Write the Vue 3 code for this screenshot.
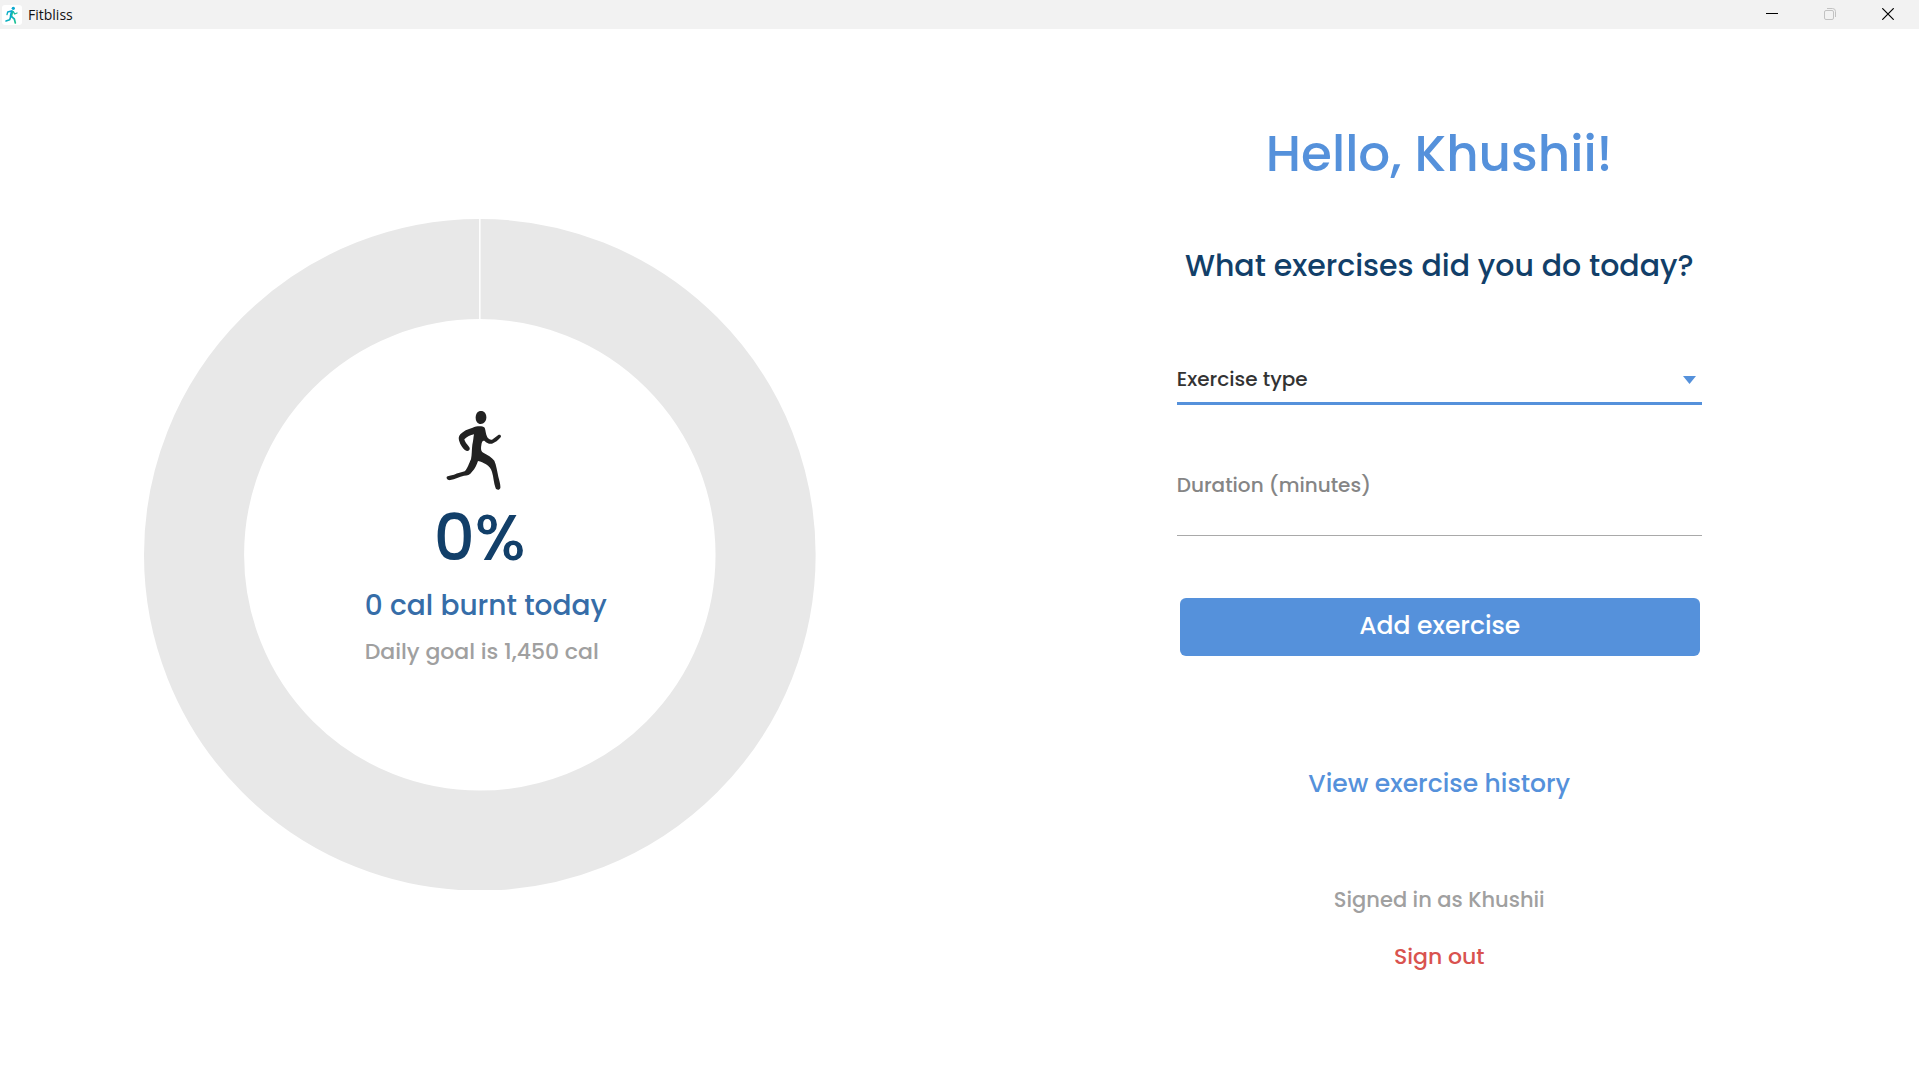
<script setup>
import { ref } from 'vue'

const userName = 'Khushii'
const caloriesBurnt = ref(0)
const dailyGoal = 1450
const exercise = ref('')
const duration = ref('')
const exercises = ['Running', 'Walking', 'Cycling', 'Swimming']
</script>

<template>
  <div class="window">
    <header class="titlebar">
      <svg class="app-icon" viewBox="0 0 60 60" aria-hidden="true">
        <defs>
          <linearGradient id="runner-tint" x1="0" y1="0" x2="1" y2="1">
            <stop offset="0" stop-color="#00a3dc" />
            <stop offset="1" stop-color="#1fc48f" />
          </linearGradient>
        </defs>
        <rect width="60" height="60" rx="9" fill="#fff" />
        <circle cx="34" cy="10" r="5" fill="#0ba9d0" />
        <g fill="none" stroke="url(#runner-tint)" stroke-linecap="round" stroke-linejoin="round">
          <path stroke-width="4" d="M28 18 L17 21 L15 29 M34 20 L38 27 L45 24" />
          <path stroke-width="8" d="M30 20 L27 33" />
          <path stroke-width="5" d="M26 35 L23 44 L12 48 M29 35 L37 42 L40 54" />
        </g>
      </svg>
      <span class="app-name">Fitbliss</span>
      <div class="controls">
        <button type="button" aria-label="Minimize">
          <svg viewBox="0 0 12 12"><path d="M0 5.5H12" stroke="#000" /></svg>
        </button>
        <button type="button" aria-label="Restore" disabled>
          <svg viewBox="0 0 12 12" fill="none" stroke="#c2c2c2">
            <rect x="0.5" y="2.5" width="9" height="9" rx="1.5" />
            <path d="M3 0.5H8.5Q11.5 0.5 11.5 3.5V9" />
          </svg>
        </button>
        <button type="button" aria-label="Close">
          <svg viewBox="0 0 12 12"><path d="M0.3 0.3L11.7 11.7M11.7 0.3L0.3 11.7" stroke="#000" stroke-width="1.2" /></svg>
        </button>
      </div>
    </header>

    <main class="content">
      <section class="progress">
        <div class="chart">
          <svg class="ring" viewBox="0 0 671 671" aria-hidden="true">
            <circle cx="335.5" cy="335.5" r="285.5" fill="none" stroke="#e8e8e8" stroke-width="100" />
            <path d="M335.5 0V101" stroke="#fff" stroke-width="1.5" />
          </svg>
          <div class="summary">
            <svg class="runner" viewBox="0 60 360 240" fill="#222" aria-hidden="true">
              <path d="M183 63C193 63 199 71 199 82C199 94 192 102 182 102C173 102 167 94 167 83C167 71 173 63 183 63Z" />
              <path d="M158 113C170 108 187 107 194 113C197 120 197 132 202 142C206 148 211 150 216 149L234 136C240 132 245 137 242 142C235 151 225 158 216 161C208 163 200 159 194 153C188 150 185 157 184 166C182 177 183 184 190 188C202 194 216 202 223 212C229 225 231 242 235 260C239 274 242 286 241 294C239 301 230 301 227 295C221 279 221 262 216 246C213 235 207 229 198 223C190 218 183 214 174 213C170 224 166 236 156 245C150 254 142 257 132 257C118 260 105 267 91 270C83 272 79 267 80 261C83 256 93 257 102 254C113 249 124 247 134 244C143 236 147 220 153 208C156 194 155 179 157 164C160 153 160 142 162 133C151 135 141 140 133 148C134 155 141 163 147 170C152 176 148 184 141 183C131 180 123 168 119 157C115 148 115 140 121 133C130 123 143 117 158 113Z" />
            </svg>
            <strong class="percent">0%</strong>
            <div class="figures">
              <p class="burnt">{{ caloriesBurnt }} cal burnt today</p>
              <p class="goal">Daily goal is {{ dailyGoal.toLocaleString('en-US') }} cal</p>
            </div>
          </div>
        </div>
      </section>

      <section class="entry">
        <h1>Hello, {{ userName }}!</h1>
        <h2>What exercises did you do today?</h2>
        <form @submit.prevent>
          <div class="picker">
            <select v-model="exercise" aria-label="Exercise type">
              <option value="">Exercise type</option>
              <option v-for="name in exercises" :key="name">{{ name }}</option>
            </select>
            <svg class="arrow" viewBox="0 0 13 8" aria-hidden="true"><path d="M0 0H13L6.500 8Z" fill="#5591db" /></svg>
          </div>
          <label for="duration">Duration (minutes)</label>
          <input id="duration" v-model="duration" type="text" inputmode="numeric" />
          <button class="add" type="submit">Add exercise</button>
        </form>
        <a class="history" href="#history">View exercise history</a>
        <p class="account">Signed in as {{ userName }}</p>
        <a class="sign-out" href="#sign-out">Sign out</a>
      </section>
    </main>
  </div>
</template>

<style>
body {
  margin: 0;
  background: #fff;
}
</style>

<style scoped>
.window {
  display: flex;
  flex-direction: column;
  min-height: 100vh;
  font-family: Poppins, Inter, sans-serif;
  font-weight: 500;
}
.window * {
  box-sizing: border-box;
}
.titlebar {
  display: flex;
  align-items: center;
  height: 29px;
  padding-left: 2px;
  background: #f2f2f2;
}
.app-icon {
  width: 20px;
  height: 20px;
}
.app-name {
  margin-left: 6px;
  font: 400 14px/20px "Segoe UI", "Open Sans", sans-serif;
  color: #111;
}
.controls {
  display: flex;
  margin: 0 2px 0 auto;
}
.controls button {
  display: grid;
  place-items: center;
  width: 58px;
  height: 29px;
  padding: 0 0 2px;
  border: 0;
  background: none;
}
.controls svg {
  width: 12px;
  height: 12px;
}
.content {
  display: grid;
  grid-template-columns: 1fr 1fr;
  flex: 1;
}
.progress {
  display: grid;
  place-items: center;
  padding-top: 1px;
}
.chart {
  display: grid;
  width: 70%;
}
.ring,
.summary {
  grid-area: 1 / 1;
}
.ring {
  width: 100%;
}
.summary {
  display: flex;
  flex-direction: column;
  align-items: center;
  justify-content: center;
  padding-bottom: 28px;
}
.runner {
  width: 120px;
  height: 80px;
}
.percent {
  margin-top: 12px;
  font-size: 64px;
  font-weight: 500;
  line-height: 72px;
  color: #123f69;
}
.figures {
  margin: 12px 0 0 12px;
}
p {
  margin: 0;
}
.burnt {
  font-size: 28px;
  line-height: 40px;
  color: #366da8;
}
.goal {
  margin-top: 8px;
  font-size: 22px;
  line-height: 36px;
  color: #a0a0a0;
}
.entry {
  display: flex;
  flex-direction: column;
  align-items: center;
  padding-top: 95px;
}
h1 {
  margin: 0;
  font-size: 50px;
  font-weight: 500;
  line-height: 60px;
  color: #5591db;
}
h2 {
  margin: 62px 0 0;
  font-size: 30px;
  font-weight: 500;
  line-height: 40px;
  color: #123f69;
}
form {
  display: flex;
  flex-direction: column;
  width: 90%;
  max-width: 525px;
  margin-top: 70px;
}
.picker {
  display: grid;
  align-items: center;
}
select,
.arrow {
  grid-area: 1 / 1;
}
select {
  width: 100%;
  height: 49px;
  padding: 0;
  border: 0;
  border-bottom: 3px solid #5591db;
  border-radius: 0;
  appearance: none;
  background: none;
  font: inherit;
  font-size: 20px;
  color: #333;
}
.arrow {
  justify-self: end;
  width: 13px;
  height: 8px;
  margin: 0 6px 2px 0;
  pointer-events: none;
}
label {
  margin-top: 65px;
  font-size: 20px;
  line-height: 30px;
  color: #858585;
}
input {
  height: 36px;
  padding: 0;
  border: 0;
  border-bottom: 1px solid #a9a9a9;
  background: none;
  font: inherit;
  font-size: 20px;
}
.add {
  height: 58px;
  margin: 62px 2px 0 3px;
  padding: 0 0 2px;
  border: 0;
  border-radius: 6px;
  background: #5591db;
  font: inherit;
  font-size: 25px;
  color: #fff;
}
a {
  text-decoration: none;
}
.history {
  margin-top: 110px;
  font-size: 25px;
  line-height: 36px;
  color: #5591db;
}
.account {
  margin-top: 82px;
  font-size: 21px;
  line-height: 32px;
  color: #a0a0a0;
}
.sign-out {
  margin-top: 25px;
  font-size: 22px;
  line-height: 32px;
  color: #d9534f;
}
</style>
